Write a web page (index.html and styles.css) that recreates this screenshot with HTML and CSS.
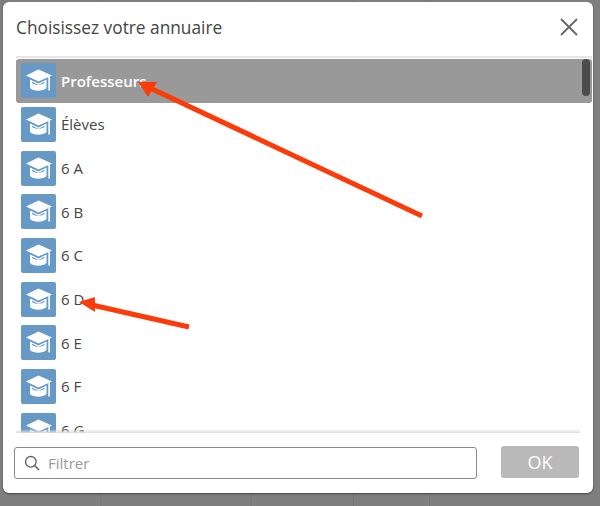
FILE: index.html
```html
<!DOCTYPE html>
<html lang="fr">
<head>
<meta charset="UTF-8" />
<meta name="viewport" content="width=device-width, initial-scale=1" />
<title>Choisissez votre annuaire</title>
<link rel="stylesheet" href="styles.css">
</head>
<body>

<svg width="0" height="0" class="defs">
  <symbol id="cap" viewBox="0 0 35 35">
    <path d="M17.5 6.5 L31 12.5 L17.5 18.5 L5 12.5 Z" fill="#fff"/>
    <path d="M9 16.5 L17.5 20.5 L25.5 16.5 V25 C22 28.5 12.5 28.5 9 25 Z" fill="#fff"/>
    <path d="M11 18.8 L17.5 21.8 L23.5 18.8 V20 C20.5 22.4 14 22.4 11 20 Z" fill="#6699c6"/>
    <rect x="27.3" y="13" width="1.6" height="14.5" fill="#fff"/>
  </symbol>
</svg>

<!-- Fenetre -->
<div class="dialog">
  <div class="dialog-head">
    <h2>Choisissez votre annuaire</h2>
    <svg class="close" width="18" height="18" viewBox="0 0 18 18">
      <path d="M1 1 L17 17 M17 1 L1 17" stroke="#666" stroke-width="1.8" fill="none"/>
    </svg>
  </div>

  <div class="list">
    <div class="row selected"><svg class="cap"><use href="#cap"/></svg><span>Professeurs</span></div>
    <div class="row"><svg class="cap"><use href="#cap"/></svg><span>Élèves</span></div>
    <div class="row"><svg class="cap"><use href="#cap"/></svg><span>6 A</span></div>
    <div class="row"><svg class="cap"><use href="#cap"/></svg><span>6 B</span></div>
    <div class="row"><svg class="cap"><use href="#cap"/></svg><span>6 C</span></div>
    <div class="row"><svg class="cap"><use href="#cap"/></svg><span>6 D</span></div>
    <div class="row"><svg class="cap"><use href="#cap"/></svg><span>6 E</span></div>
    <div class="row"><svg class="cap"><use href="#cap"/></svg><span>6 F</span></div>
    <div class="row"><svg class="cap"><use href="#cap"/></svg><span>6 G</span></div>
    <div class="thumb"></div>
  </div>

  <div class="dialog-foot">
    <div class="filter">
      <svg width="16" height="16" viewBox="0 0 16 16">
        <circle cx="6.8" cy="6.8" r="5.3" stroke="#666" stroke-width="1.4" fill="none"/>
        <path d="M10.8 10.8 L15 15" stroke="#666" stroke-width="1.6"/>
      </svg>
      <span>Filtrer</span>
    </div>
    <button>OK</button>
  </div>
</div>

<!-- Fleches rouges -->
<svg class="arrows" width="600" height="506" viewBox="0 0 600 506">
  <path d="M422 216 L150 88" stroke="#fb3c0a" stroke-width="5" fill="none"/>
  <path d="M138 82 L157 82 L148 97 Z" fill="#fb3c0a"/>
  <path d="M189 327 L92 305" stroke="#fb3c0a" stroke-width="5" fill="none"/>
  <path d="M79 302 L95 297 L95 312 Z" fill="#fb3c0a"/>
</svg>

</body>
</html>
```

FILE: styles.css
```css
/* Fond et fenetre */
body {
  margin: 0;
  width: 600px;
  height: 506px;
  overflow: hidden;
  background-color: #7f7f7f;
  background-image:
    linear-gradient(#757575, #757575),
    linear-gradient(#757575, #757575),
    linear-gradient(#757575, #757575),
    linear-gradient(#757575, #757575);
  background-size: 1px 100%;
  background-position: 100px 0, 251px 0, 353px 0, 429px 0;
  background-repeat: no-repeat;
  color: #444;
  font-family: 'Open Sans', sans-serif;
  position: relative;
}
.defs {
  position: absolute;
}
.dialog {
  margin: 2px 0 0 3px;
  width: 590px;
  height: 491px;
  background: #fff;
  border-radius: 6px;
  box-shadow: 0 1px 2px #444;
  display: flex;
  flex-direction: column;
}
.dialog-head {
  height: 54px;
  padding: 0 15px 4px 13px;
  box-sizing: border-box;
  display: flex;
  justify-content: space-between;
  align-items: center;
}
h2 {
  margin: 0;
  font-size: 17.3px;
  font-weight: 400;
  color: #444;
}
/* Liste */
.list {
  height: 377px;
  margin: 0 1px 0 13px;
  padding-top: 1px;
  box-sizing: border-box;
  border-top: 2px solid #e6e6e6;
  overflow: hidden;
  position: relative;
}
.list::after {
  content: "";
  position: absolute;
  left: 0;
  right: 12px;
  bottom: 0;
  height: 4px;
  background: linear-gradient(rgba(220, 220, 220, 0), #dcdcdc);
}
.row {
  height: 43.67px;
  padding-left: 5px;
  display: flex;
  align-items: center;
  gap: 5px;
  font-size: 15px;
  flex-shrink: 0;
}
.row.selected {
  background: #999;
  color: #fff;
  font-weight: 600;
  border-radius: 3px;
}
.cap {
  width: 35px;
  height: 35px;
  background: #6699c6;
  border-radius: 2px;
  flex-shrink: 0;
}
.thumb {
  position: absolute;
  top: 1px;
  right: 2px;
  width: 8px;
  height: 37px;
  background: #4c4c4c;
  border-radius: 4px;
}
/* Bas de fenetre */
.dialog-foot {
  flex: 1;
  padding: 13px 14px 0 11px;
  display: flex;
  align-items: flex-start;
  justify-content: space-between;
}
.filter {
  width: 463px;
  height: 32px;
  margin-top: 1px;
  box-sizing: border-box;
  border: 1px solid #888;
  border-radius: 3px;
  padding-left: 9px;
  display: flex;
  align-items: center;
  gap: 8px;
  font-size: 15px;
  color: #999;
}
button {
  width: 78px;
  height: 32px;
  border: none;
  border-radius: 3px;
  background: #b9b9b9;
  color: #fff;
  font-family: inherit;
  font-size: 18px;
  font-weight: 400;
  padding: 0;
}
.arrows {
  position: absolute;
  left: 0;
  top: 0;
}
```
